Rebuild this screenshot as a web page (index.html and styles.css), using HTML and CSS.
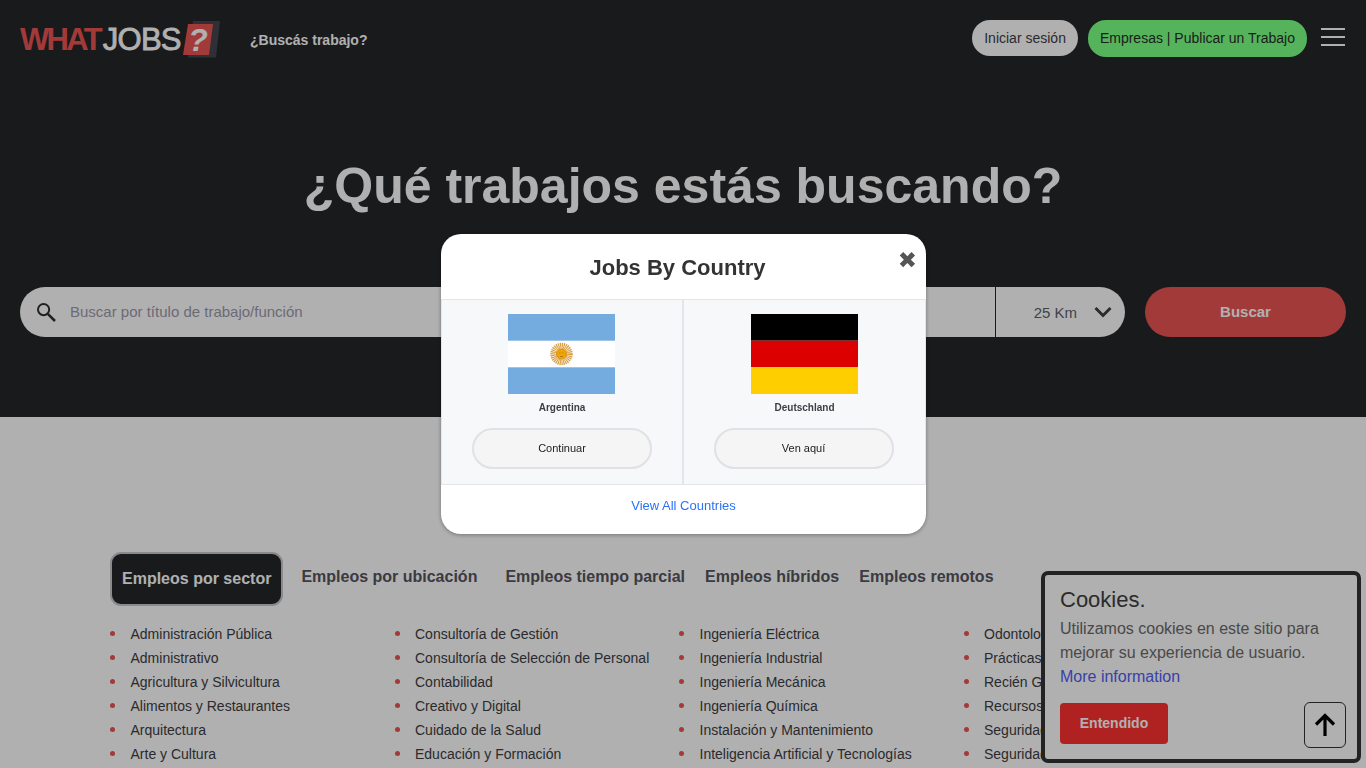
FILE: index.html
```html
<!DOCTYPE html>
<html lang="es">
<head>
<meta charset="utf-8">
<title>WhatJobs</title>
<link rel="stylesheet" href="styles.css">
</head>
<body>
<section class="hero">
  <header class="nav">
    <a class="logo"><span class="logo-what">WHAT</span><span class="logo-jobs">JOBS</span>
      <svg class="logo-mark" width="40" height="40" viewBox="0 0 40 40">
        <polygon points="13,1 40,1 36,37.5 8,37.5" fill="#43464e"/>
        <polygon points="8,4 33,4 29,35 3,35" fill="#ec5454"/>
        <text x="18" y="31" class="logo-q">?</text>
      </svg>
    </a>
    <a class="nav-q">¿Buscás trabajo?</a>
    <div class="nav-right">
      <a class="btn-login">Iniciar sesión</a>
      <a class="btn-post">Empresas | Publicar un Trabajo</a>
      <div class="burger"><i></i><i></i><i></i></div>
    </div>
  </header>
  <h1 class="hero-title">¿Qué trabajos estás buscando?</h1>
  <form class="search">
    <div class="search-box">
      <svg class="search-icon" width="20" height="20" viewBox="0 0 20 20" fill="none" stroke="#303030" stroke-width="2">
        <circle cx="7.6" cy="7.6" r="5.6"/><path d="M11.8 11.8 19 19" stroke-width="2.5"/>
      </svg>
      <span class="search-ph">Buscar por título de trabajo/función</span>
      <div class="search-km">
        <span>25 Km</span>
        <svg width="18" height="12" viewBox="0 0 18 12" fill="none" stroke="#3f3f46" stroke-width="3"><path d="M1.5 2 9 9.5 16.5 2"/></svg>
      </div>
    </div>
    <a class="search-btn">Buscar</a>
  </form>
</section>

<main class="content">
  <nav class="tabs">
    <a class="tab tab-active">Empleos por sector</a>
    <a class="tab tab-gap">Empleos por ubicación</a>
    <a class="tab">Empleos tiempo parcial</a>
    <a class="tab">Empleos híbridos</a>
    <a class="tab">Empleos remotos</a>
  </nav>
  <div class="cols">
    <ul><li>Administración Pública</li><li>Administrativo</li><li>Agricultura y Silvicultura</li><li>Alimentos y Restaurantes</li><li>Arquitectura</li><li>Arte y Cultura</li></ul>
    <ul><li>Consultoría de Gestión</li><li>Consultoría de Selección de Personal</li><li>Contabilidad</li><li>Creativo y Digital</li><li>Cuidado de la Salud</li><li>Educación y Formación</li></ul>
    <ul><li>Ingeniería Eléctrica</li><li>Ingeniería Industrial</li><li>Ingeniería Mecánica</li><li>Ingeniería Química</li><li>Instalación y Mantenimiento</li><li>Inteligencia Artificial y Tecnologías</li></ul>
    <ul><li>Odontología</li><li>Prácticas</li><li>Recién Graduados</li><li>Recursos Humanos</li><li>Seguridad</li><li>Seguridad Social</li></ul>
  </div>
</main>

<aside class="cookie">
  <h4 class="cookie-title">Cookies.</h4>
  <p class="cookie-text">Utilizamos cookies en este sitio para mejorar su experiencia de usuario. <a class="cookie-link">More information</a></p>
  <a class="cookie-btn">Entendido</a>
</aside>
<a class="to-top">
  <svg width="24" height="24" viewBox="0 0 24 24" fill="none" stroke="#000" stroke-width="3.2"><path d="M12 23V3M3 11.5l9-9 9 9"/></svg>
</a>

<div class="overlay"></div>

<div class="modal">
  <div class="modal-head">
    <h2 class="modal-title">Jobs By Country</h2>
    <span class="modal-close">✖</span>
  </div>
  <div class="modal-body">
    <div class="country">
      <svg class="flag flag-first" width="107" height="80" viewBox="0 0 107 80">
        <rect width="107" height="80" fill="#74acdf"/>
        <rect y="26.7" width="107" height="26.6" fill="#fff"/>
        <circle cx="53.5" cy="40" r="7.8" fill="none" stroke="#d99a3a" stroke-width="6.8" stroke-dasharray="1 .6"/>
        <circle cx="53.5" cy="40" r="5" fill="#f0a500" stroke="#c98a12" stroke-width=".8"/>
        <path d="M51.5 39h1M54.5 39h1M52 42.5h3" stroke="#a5700c" stroke-width=".8"/>
      </svg>
      <span class="country-name">Argentina</span>
      <a class="country-btn">Continuar</a>
    </div>
    <div class="country country-last">
      <svg class="flag" width="107" height="80" viewBox="0 0 107 80">
        <rect width="107" height="26.7" fill="#000"/>
        <rect y="26.7" width="107" height="26.6" fill="#dd0000"/>
        <rect y="53.3" width="107" height="26.7" fill="#ffce00"/>
      </svg>
      <span class="country-name">Deutschland</span>
      <a class="country-btn">Ven aquí</a>
    </div>
  </div>
  <div class="modal-foot"><a class="modal-link">View All Countries</a></div>
</div>
</body>
</html>
```
FILE: styles.css
```css
* { box-sizing: border-box; }
html, body { height: 100%; }
body {
  margin: 0;
  overflow: hidden;
  background: #fff;
  font-family: "Liberation Sans", Arial, sans-serif;
  color: #3d3d43;
}
.hero {
  height: 417px;
  background: #242629;
  padding: 0 20px;
}
.nav {
  display: flex;
  align-items: center;
  height: 76px;
}
.logo {
  display: flex;
  align-items: center;
  width: 230px;
  margin-top: 4px;
  font-size: 31px;
  line-height: 40px;
  flex: none;
}
.logo-what { color: #ec5454; font-weight: 700; letter-spacing: -2.7px; }
.logo-jobs {
  color: #fff;
  font-weight: 400;
  letter-spacing: -.7px;
  margin-left: 2.8px;
  -webkit-text-stroke: .8px #fff;
}
.logo-mark { margin-left: -1px; flex: none; }
.logo-q {
  font: italic 700 32px "Liberation Sans", Arial, sans-serif;
  fill: #fff;
  text-anchor: middle;
}
.nav-q { color: #fff; font-size: 14px; font-weight: 700; margin-top: 4px; }
.nav-right {
  margin-left: auto;
  display: flex;
  align-items: flex-start;
  height: 37px;
  margin-top: 1px;
}
.btn-login {
  height: 36px;
  line-height: 36px;
  padding: 0 12px;
  border-radius: 18px;
  background: #fff;
  color: #3d3d43;
  font-size: 14px;
}
.btn-post {
  position: relative;
  z-index: 60;
  height: 37px;
  line-height: 36px;
  margin-left: 10px;
  padding: 0 12px;
  border-radius: 18px;
  background: #55b35b;
  color: #1a1c1a;
  font-size: 14px;
}
.burger {
  margin: 8px 1px 0 14px;
  width: 24px;
  display: flex;
  flex-direction: column;
  gap: 6px;
}
.burger i { display: block; height: 2px; background: #fff; }
.hero-title {
  margin: 75px 0 0;
  height: 70px;
  line-height: 70px;
  text-align: center;
  font-size: 50px;
  font-weight: 700;
  color: #fff;
}
.search {
  display: flex;
  gap: 20px;
  margin-top: 66px;
}
.search-box {
  flex: 1;
  height: 50px;
  display: flex;
  align-items: center;
  background: #fff;
  border-radius: 25px;
  padding-left: 16px;
}
.search-icon { flex: none; }
.search-ph { margin: -2px 0 0 14px; font-size: 15px; color: #9b9bab; }
.search-km {
  margin-left: auto;
  width: 130px;
  height: 100%;
  border-left: 1px solid #242629;
  display: flex;
  align-items: center;
  justify-content: flex-end;
  gap: 17px;
  padding-right: 13px;
  font-size: 15px;
  color: #5f5f68;
}
.search-btn {
  width: 201px;
  height: 50px;
  line-height: 50px;
  text-align: center;
  border-radius: 25px;
  background: #ec5454;
  color: #fff;
  font-size: 15px;
  font-weight: 700;
}
.content { padding: 135px 113px 0 110px; }
.tabs { display: flex; align-items: flex-start; }
.tab {
  display: block;
  padding: 14px 10px;
  font-size: 16px;
  font-weight: 700;
  line-height: 22px;
  color: #55555e;
}
.tab-gap { margin-right: 8px; }
.tab-active {
  margin-right: 8px;
  padding: 14px 10px;
  height: 54px;
  line-height: 22px;
  border: 2px solid #c8c8cc;
  border-radius: 11px;
  background: #242629;
  color: #fff;
}
.cols {
  display: grid;
  grid-template-columns: repeat(4, 284.5px);
  margin-top: 16px;
}
.cols ul { margin: 0; padding: 0; list-style: none; }
.cols li {
  display: flex;
  align-items: center;
  gap: 15.5px;
  height: 24px;
  font-size: 14px;
  color: #3d3d43;
}
.cols li::before {
  content: "";
  width: 5px;
  height: 5px;
  border-radius: 50%;
  background: #ec5454;
  flex: none;
  margin-top: -1px;
}
.cookie {
  position: fixed;
  left: 1041px;
  top: 571px;
  width: 320px;
  height: 192px;
  padding: 12px 15px;
  background: #fff;
  border: 4px solid #333;
  border-radius: 7px;
}
.cookie-title {
  margin: 0;
  font-size: 22px;
  font-weight: 400;
  line-height: 26px;
  color: #404040;
}
.cookie-text {
  margin: 4px 0 14px;
  font-size: 16px;
  line-height: 24px;
  color: #6b6b6b;
}
.cookie-link { display: block; color: #545df6; }
.cookie-btn {
  display: block;
  width: 108px;
  height: 41px;
  line-height: 41px;
  text-align: center;
  border-radius: 4px;
  background: #ff3131;
  color: #fff;
  font-size: 14px;
  font-weight: 700;
}
.to-top {
  position: fixed;
  left: 1304px;
  top: 702px;
  width: 42px;
  height: 46px;
  display: flex;
  align-items: center;
  justify-content: center;
  border: 1px solid #333;
  border-radius: 6px;
}
.overlay {
  position: fixed;
  inset: 0;
  z-index: 50;
  background: rgba(0, 0, 0, .31);
}
.modal {
  position: fixed;
  z-index: 100;
  left: 441px;
  top: 234px;
  width: 485px;
  height: 300px;
  display: flex;
  flex-direction: column;
  background: #fff;
  border-radius: 20px;
  box-shadow: 0 1px 4px rgba(0, 0, 0, .35);
  overflow: hidden;
}
.modal-head {
  position: relative;
  height: 66px;
  flex: none;
  border-bottom: 1px solid #e4e5e8;
}
.modal-title {
  margin: 0;
  padding-right: 12px;
  line-height: 67px;
  text-align: center;
  font-size: 22px;
  font-weight: 700;
  color: #333;
}
.modal-close {
  position: absolute;
  right: 9px;
  top: 12px;
  font-family: "DejaVu Sans", sans-serif;
  font-size: 23px;
  line-height: 28px;
  color: #555;
}
.modal-body {
  display: grid;
  grid-template-columns: 243px 1fr;
  height: 185px;
  flex: none;
  border-bottom: 1px solid #e4e5e8;
}
.country {
  display: flex;
  flex-direction: column;
  align-items: center;
  padding-top: 14px;
  background: #f7f8fa;
  border-left: 1px solid #e4e5e8;
  border-right: 2px solid #e4e5e8;
}
.country-last { border-left: 0; border-right: 1px solid #e4e5e8; }
.flag { display: block; flex: none; }
.flag-first { margin-right: 2px; }
.country-name {
  margin-top: 8px;
  font-size: 10px;
  font-weight: 700;
  line-height: 12px;
  color: #3d3d43;
}
.country-btn {
  margin-top: 14px;
  width: 180px;
  height: 41px;
  line-height: 37px;
  text-align: center;
  border: 2px solid #e0e0e6;
  border-radius: 21px;
  background: #f5f5f5;
  font-size: 11px;
  color: #222;
}
.country-last .country-btn { margin-right: 2px; }
.modal-foot { text-align: center; padding-top: 11px; line-height: 18px; }
.modal-link { font-size: 13px; color: #2a72f8; }
```
